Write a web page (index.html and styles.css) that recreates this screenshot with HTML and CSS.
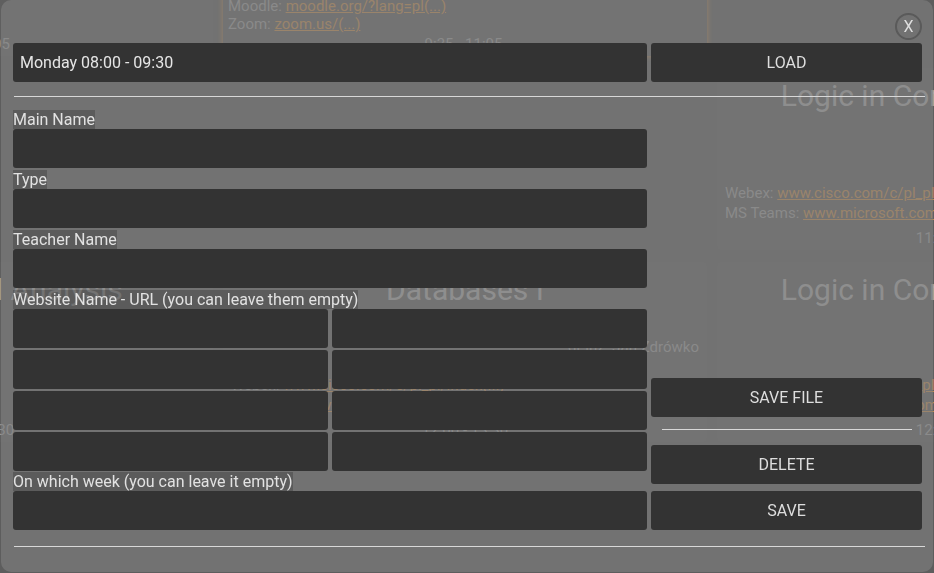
FILE: index.html
```html
<!DOCTYPE html>
<html lang="en">
<head>
<meta charset="utf-8">
<title>Edit lesson</title>
<link rel="stylesheet" href="styles.css">
</head>
<body>
<div class="timetable">
  <div class="lesson c1 r1">
    <div class="title">Algebra</div>
    <div class="links">Moodle: <a>moodle.org/?lang=pl(...)</a><br>Zoom: <a>zoom.us/(...)</a></div>
    <div class="time">9:35 - 11:05</div>
  </div>
  <div class="lesson c1 r3">
    <div class="title">Mathematical Analysis</div>
    <div class="links">Webex: <a>www.cisco.com/c/pl_pl/(...)</a></div>
    <div class="time">12:00 - 13:30</div>
  </div>
  <div class="lesson c2 r1 current">
    <div class="title">Programming I</div>
    <div class="links">Moodle: <a>moodle.org/?lang=pl(...)</a><br>Zoom: <a>zoom.us/(...)</a></div>
    <div class="time">9:35 - 11:05</div>
  </div>
  <div class="lesson c2 r3">
    <div class="title">Databases I</div>
    <div class="teacher">dr inż. Jan Zdrówko</div>
    <div class="links">Webex: <a>www.cisco.com/c/pl_pl/index(...)</a><br>MS Teams: <a>www.microsoft.com/(...)</a></div>
    <div class="time">12:00 - 13:30</div>
  </div>
  <div class="lesson c3 r2">
    <div class="title">Logic in Computer Science</div>
    <div class="links">Webex: <a>www.cisco.com/c/pl_pl/index(...)</a><br>MS Teams: <a>www.microsoft.com/pl-pl/(...)</a></div>
    <div class="time">11:15 - 12:45</div>
  </div>
  <div class="lesson c3 r3">
    <div class="title">Logic in Computer Science</div>
    <div class="links">Webex: <a>www.cisco.com/c/pl_pl/index(...)</a><br>MS Teams: <a>www.microsoft.com/pl-pl/(...)</a></div>
    <div class="time">12:00 - 13:30</div>
  </div>
</div>

<div class="modal">
  <div class="modal-head"><button class="close">X</button></div>
  <div class="row-top">
    <input class="text-input" value="Monday 08:00 - 09:30">
    <button class="btn">LOAD</button>
  </div>
  <hr class="sep">
  <div class="modal-body">
    <div class="fields">
      <div class="field"><label>Main Name</label><input class="text-input"></div>
      <div class="field"><label>Type</label><input class="text-input"></div>
      <div class="field"><label>Teacher Name</label><input class="text-input"></div>
      <div class="field url"><label>Website Name - URL (you can leave them empty)</label>
        <div class="url-grid">
          <input class="text-input"><input class="text-input">
          <input class="text-input"><input class="text-input">
          <input class="text-input"><input class="text-input">
          <input class="text-input"><input class="text-input">
        </div>
      </div>
      <div class="field last"><label>On which week (you can leave it empty)</label><input class="text-input"></div>
    </div>
    <div class="actions">
      <button class="btn">SAVE FILE</button>
      <hr class="sep-short">
      <button class="btn">DELETE</button>
      <button class="btn btn-save">SAVE</button>
    </div>
  </div>
  <hr class="sep bottom">
</div>
</body>
</html>
```

FILE: styles.css
```css
* { box-sizing: border-box; }
html, body { margin: 0; height: 100%; }
body {
  background: #5d5d5d;
  font-family: Roboto, "Liberation Sans", sans-serif;
  overflow: hidden;
}

/* background timetable */
.timetable {
  display: grid;
  grid-template-columns: repeat(3, 484px);
  grid-template-rows: 182px 182px 180px;
  gap: 12px 10px;
  margin: -126px 0 0 -271px;
}
.c1 { grid-column: 1; }
.c2 { grid-column: 2; }
.c3 { grid-column: 3; }
.r1 { grid-row: 1; }
.r2 { grid-row: 2; }
.r3 { grid-row: 3; }
.lesson {
  display: flex;
  flex-direction: column;
  padding: 10px 8px 3px;
  background: #5f5f5f;
  border-radius: 4px;
  color: #989898;
  font-size: 15px;
  white-space: nowrap;
  overflow: hidden;
}
.lesson.current {
  overflow: visible;
  box-shadow: 0 0 5px 1px rgba(200, 140, 70, 0.7);
  padding-left: 5px;
}
.lesson .title {
  font-size: 30px;
  line-height: 36px;
  text-align: center;
  color: #a4a4a4;
}
.lesson .teacher {
  margin-top: auto;
  margin-bottom: 18px;
  line-height: 20px;
  text-align: right;
}
.lesson .links {
  margin-top: auto;
  margin-bottom: 6px;
  line-height: 20px;
  overflow: hidden;
}
.lesson .teacher + .links { margin-top: 0; }
.lesson.current .links { line-height: 18px; margin-bottom: 2px; }
.lesson a { color: #c08a4c; text-decoration: underline; }
.lesson .time { text-align: center; line-height: 18px; }

/* modal */
.modal {
  position: fixed;
  top: 0;
  left: 1px;
  width: 932px;
  height: 572px;
  padding: 13px 11px 0 12px;
  background: rgba(128, 128, 128, 0.6);
  border-radius: 10px;
  color: #dedede;
  font-size: 16px;
}
.modal-head { display: flex; justify-content: flex-end; }
.close {
  width: 27px;
  height: 27px;
  padding: 0;
  border: 2px solid #5a5a5a;
  border-radius: 50%;
  background: transparent;
  color: #dedede;
  font: 16px Roboto, "Liberation Sans", sans-serif;
  display: flex;
  align-items: center;
  justify-content: center;
}
.row-top, .modal-body {
  display: grid;
  grid-template-columns: 634px 271px;
  column-gap: 4px;
}
.row-top { margin-top: 3px; }
.sep {
  height: 0;
  border: 0;
  border-top: 1px solid #d8d8d8;
  margin: 14px -3px 13px 1px;
}
.sep.bottom { margin: 16px -3px 0 1px; }
.text-input {
  display: block;
  width: 100%;
  height: 39px;
  padding: 0 7px;
  background: #333333;
  border: 0;
  border-radius: 3px;
  outline: none;
  color: #e6e6e6;
  font: 16px Roboto, "Liberation Sans", sans-serif;
}
.btn {
  height: 39px;
  background: #333333;
  border: 0;
  border-radius: 3px;
  color: #dedede;
  font: 16px Roboto, "Liberation Sans", sans-serif;
  padding: 0;
}
.field {
  display: flex;
  flex-direction: column;
  align-items: flex-start;
  margin-bottom: 2px;
}
.field.url { margin-bottom: 1px; }
.field.last { margin-bottom: 0; }
.field label {
  background: rgba(0, 0, 0, 0.2);
  line-height: 19px;
  color: #e2e2e2;
}
.url-grid {
  display: grid;
  width: 100%;
  grid-template-columns: 315px 315px;
  grid-auto-rows: 39px;
  gap: 2px 4px;
}
.actions {
  display: flex;
  flex-direction: column;
  justify-content: flex-end;
}
.sep-short {
  height: 0;
  border: 0;
  border-top: 1px solid #d8d8d8;
  margin: 12px 10px 15px 11px;
}
.btn-save { margin-top: 7px; }
```
